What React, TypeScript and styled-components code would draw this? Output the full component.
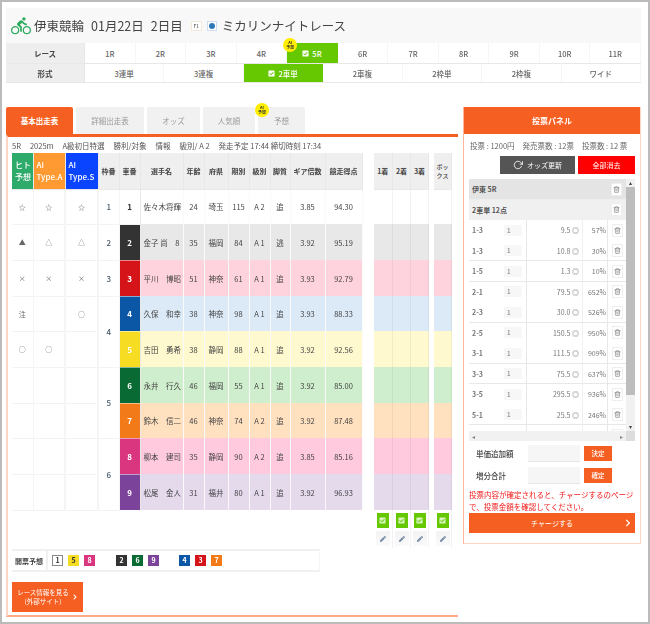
import styled, { createGlobalStyle } from 'styled-components';
import { FaCheckSquare, FaChevronRight, FaPen } from 'react-icons/fa';
import { FiRotateCw, FiTrash2 } from 'react-icons/fi';
import { MdDirectionsBike } from 'react-icons/md';

const GlobalStyle = createGlobalStyle`
  html, body { margin: 0; padding: 0; background: #fff; }
  body { font-family: "Noto Sans CJK JP", "Liberation Sans", sans-serif; color: #333; }
  * { box-sizing: border-box; }
`;

const Frame = styled.div`
  width: 650px;
  height: 624px;
  border: 2px solid #bbb;
  padding: 6px 7px 0 4px;
  overflow: hidden;
  filter: blur(0.6px);
`;
const Header = styled.header`
  background: #f8f8f8;
  height: 75px;
`;
const TitleRow = styled.div`
  height: 35px;
  display: flex;
  align-items: center;
  padding-left: 5px;
  font-size: 12.5px;
  color: #444;
  svg { color: #2dab5f; margin-right: 3px; }
`;
const Gap = styled.span`
  display: inline-block;
  width: ${p => p.$w}px;
`;
const GradeBadge = styled.span`
  width: 11px;
  height: 10px;
  margin: 0 5px 0 8px;
  border: 1px solid #f2ead8;
  background: #fff;
  font-size: 5px;
  line-height: 8px;
  text-align: center;
`;
const NightIcon = styled.span`
  width: 10px;
  height: 10px;
  margin-right: 5px;
  background: #fff;
  border: 1px solid #cde;
  display: flex;
  align-items: center;
  justify-content: center;
  &::after {
    content: '';
    width: 6px;
    height: 6px;
    border-radius: 50%;
    background: #2c78b8;
  }
`;
const NavRow = styled.div`
  display: flex;
  height: ${p => p.$h}px;
  border-bottom: 1px solid #e8e8e8;
  background: #fff;
`;
const NavLabel = styled.div`
  width: 79px;
  flex: none;
  background: #eee;
  border-right: 1px solid #e8e8e8;
  font-size: 7.5px;
  font-weight: 700;
  color: #444;
  display: flex;
  align-items: center;
  justify-content: center;
`;
const NavCell = styled.div`
  flex: 1;
  position: relative;
  font-size: 7.5px;
  font-weight: 500;
  display: flex;
  align-items: center;
  justify-content: center;
  gap: 3px;
  color: ${p => (p.$active ? '#fff' : '#666')};
  background: ${p => (p.$active ? '#66c800' : '#fff')};
  border-right: 1px solid ${p => (p.$active ? '#66c800' : '#f6f6f6')};
`;
const AiBadge = styled.span`
  position: absolute;
  top: ${p => p.$top}px;
  left: ${p => p.$left}px;
  width: 14px;
  height: 14px;
  border-radius: 50%;
  background: #ffee00;
  color: #333;
  font-size: 4px;
  font-weight: 700;
  line-height: 5px;
  text-align: center;
  padding-top: 2px;
`;

const Main = styled.div`
  display: flex;
  gap: 5px;
  margin-top: 24px;
  align-items: flex-start;
`;
const LeftColumn = styled.section`
  width: 452px;
  flex: none;
`;
const Tabs = styled.div`
  display: flex;
  gap: 3px;
  height: 27px;
`;
const Tab = styled.div`
  position: relative;
  width: ${p => p.$w}px;
  border-radius: 2px 2px 0 0;
  font-size: 7.5px;
  font-weight: ${p => (p.$active ? 700 : 400)};
  color: ${p => (p.$active ? '#fff' : '#999')};
  background: ${p => (p.$active ? '#f55f22' : '#f1f1f1')};
  display: flex;
  align-items: center;
  justify-content: center;
`;
const LeftBody = styled.div`
  height: 483px;
  border-top: 3px solid #f55f22;
  border-left: 2px solid #ffd5c6;
  border-bottom: 2px solid #ffa98a;
  padding-left: 4px;
`;
const InfoLine = styled.div`
  height: 16px;
  display: flex;
  align-items: center;
  gap: 9px;
  font-size: 7.5px;
  color: #555;
  white-space: nowrap;
`;
const TablesRow = styled.div`
  display: flex;
  align-items: flex-start;
  height: 396px;
`;
const Table = styled.table`
  border-collapse: collapse;
  table-layout: fixed;
  width: ${p => p.$w}px;
  margin-right: ${p => p.$mr || 0}px;
  font-size: 8px;
`;
const Th = styled.th`
  height: 36px;
  padding: 0;
  background: ${p => p.$bg || '#efefef'};
  color: ${p => (p.$bg ? '#fff' : '#444')};
  font-size: ${p => (p.$bg ? '8px' : '7px')};
  font-weight: ${p => (p.$bg ? 500 : 700)};
  line-height: 12px;
  text-align: ${p => (p.$bg ? 'left' : 'center')};
  padding-left: ${p => (p.$bg ? '3px' : '0')};
  border-right: 1px solid #e8e8e8;
  border-bottom: 1px solid #e8e8e8;
`;
const BoxTh = styled(Th)`
  font-size: 6px;
  line-height: 9px;
  font-weight: 500;
`;
const Tr = styled.tr`
  height: ${p => p.$h}px;
`;
const Mark = styled.td`
  padding: 0;
  text-align: center;
  font-size: 7px;
  color: #666;
  background: #fff;
  border-right: ${p => (p.$strong ? 2 : 1)}px solid #f5f5f5;
  border-bottom: 1px solid #f3f3f3;
`;
const Waku = styled(Mark)`
  font-size: 8px;
  font-weight: 500;
  color: #4a5a6a;
`;
const CarNo = styled.td`
  padding: 0;
  text-align: center;
  font-size: 8px;
  font-weight: 700;
  color: ${p => p.$fg};
  background: ${p => p.$bg};
  border-left: 1px solid #e8e8e8;
  border-right: 1px solid #e8e8e8;
  border-bottom: 1px solid ${p => (p.$bg === '#ffffff' ? '#f3f3f3' : 'rgba(255,255,255,.5)')};
`;
const Cell = styled.td`
  padding: 0 0 0 ${p => p.$pl || 0}px;
  text-align: ${p => (p.$pl ? 'left' : 'center')};
  font-size: 7.5px;
  color: #444;
  background: ${p => p.$bg};
  white-space: nowrap;
  overflow: hidden;
  border-right: 1px solid rgba(0, 0, 0, 0.02);
`;
const BetCell = styled.td`
  padding: 0;
  background: ${p => p.$bg};
  border-right: 1px solid rgba(0, 0, 0, 0.05);
`;
const ToolCell = styled.td`
  padding: 3px 0 0;
  text-align: center;
  vertical-align: top;
  height: 38px;
  border-right: 1px solid #f2f2f2;
`;
const GreenButton = styled.div`
  width: 12px;
  height: 15px;
  margin: 0 auto 3px;
  background: #66c800;
  color: #d8f5c0;
  display: flex;
  align-items: center;
  justify-content: center;
`;
const GreyButton = styled.div`
  width: 14px;
  height: 15px;
  margin: 0 auto;
  background: linear-gradient(#f3f3f3, #fafafa);
  color: #7a8ea8;
  display: flex;
  align-items: center;
  justify-content: center;
`;
const PredictRow = styled.div`
  width: 308px;
  height: 23px;
  display: flex;
  align-items: center;
  border-top: 2px solid #f0f0f0;
  border-bottom: 2px solid #f0f0f0;
  border-right: 1px solid #f4f4f4;
`;
const PredictLabel = styled.div`
  width: 36px;
  height: 100%;
  border-right: 2px solid #f0f0f0;
  font-size: 7px;
  font-weight: 700;
  color: #444;
  display: flex;
  align-items: center;
  justify-content: center;
  margin-right: 4px;
`;
const Chip = styled.span`
  width: 11px;
  height: 11px;
  margin-right: ${p => p.$mr || 5}px;
  background: ${p => p.$bg};
  color: ${p => p.$fg};
  border: 1px solid ${p => (p.$bg === '#ffffff' ? '#888' : p.$bg)};
  font-size: 7px;
  font-weight: 700;
  line-height: 9px;
  text-align: center;
`;
const OrangeLink = styled.div`
  width: 71px;
  height: 30px;
  margin-top: 10px;
  background: #f55f22;
  color: #fff;
  font-size: 6.5px;
  line-height: 9px;
  display: flex;
  align-items: center;
  justify-content: center;
  gap: 3px;
  text-align: center;
`;

const Panel = styled.aside`
  width: 178px;
  flex: none;
  height: 437px;
  border-left: 1px solid #ffb59a;
  border-bottom: 1px solid #ffd5c6;
  border-right: 1px solid #ffd5c6;
`;
const PanelHead = styled.div`
  height: 27px;
  background: #f55f22;
  color: #fff;
  font-size: 8px;
  font-weight: 700;
  display: flex;
  align-items: center;
  justify-content: center;
`;
const PanelStats = styled.div`
  height: 22px;
  padding: 0 0 0 6px;
  display: flex;
  align-items: center;
  gap: 8px;
  font-size: 7.5px;
  color: #666;
  white-space: nowrap;
`;
const ButtonRow = styled.div`
  display: flex;
  justify-content: flex-end;
  gap: 3px;
  padding-right: 5px;
`;
const ActionButton = styled.div`
  width: ${p => p.$w}px;
  height: 18px;
  background: ${p => p.$bg};
  color: #fff;
  font-size: 7px;
  display: flex;
  align-items: center;
  justify-content: center;
  gap: 4px;
`;
const ListBox = styled.div`
  margin: 5px 5px 0 5px;
  display: grid;
  grid-template-columns: 1fr 9px;
  grid-template-rows: 252px 10px;
  background: #f4f4f4;
`;
const ListClip = styled.div`
  overflow: hidden;
  background: #fff;
`;
const SummaryRow = styled.div`
  height: ${p => p.$h}px;
  background: ${p => p.$bg};
  border-bottom: 1px solid #eee;
  font-size: 7px;
  font-weight: 700;
  color: #555;
  display: flex;
  align-items: center;
  justify-content: space-between;
  padding: 0 4px 0 3px;
`;
const MiniButton = styled.span`
  width: 11px;
  height: 13px;
  background: #fff;
  border: 1px solid #eee;
  color: #777;
  display: flex;
  align-items: center;
  justify-content: center;
`;
const BetRow = styled.div`
  height: 20.5px;
  display: grid;
  grid-template-columns: 58px 56px 25px 1fr;
  align-items: center;
  font-size: 7px;
  color: #777;
  border-bottom: ${p => (p.$line ? '1px solid #e8e8e8' : 'none')};
`;
const Combo = styled.div`
  height: 100%;
  padding-left: 3px;
  display: flex;
  align-items: center;
  justify-content: space-between;
  padding-right: 4px;
  font-weight: 700;
  border-right: 1px solid #e8e8e8;
`;
const Qty = styled.span`
  width: 18px;
  height: 11px;
  background: #f7f7f7;
  color: #999;
  font-size: 6px;
  line-height: 11px;
  padding-left: 3px;
`;
const Odds = styled.div`
  height: 100%;
  padding-right: 3px;
  display: flex;
  align-items: center;
  justify-content: flex-end;
  gap: 2px;
  border-right: 1px solid #f0f0f0;
`;
const Rate = styled.div`
  height: 100%;
  padding-right: 1px;
  text-align: right;
  line-height: 20px;
  border-right: 1px solid #e8e8e8;
`;
const RowTool = styled.div`
  display: flex;
  justify-content: center;
`;
const ScrollTrack = styled.div`
  background: #f1f1f1;
  display: flex;
  flex-direction: column;
  align-items: center;
  color: #444;
  font-size: 6px;
  line-height: 8px;
`;
const ScrollThumb = styled.div`
  width: 100%;
  height: 208px;
  background: #bdbdbd;
`;
const ScrollArrow = styled.span`
  height: 8px;
  margin-top: ${p => p.$mt || 0}px;
`;
const HScroll = styled.div`
  background: #f1f1f1;
  color: #888;
  font-size: 6px;
  display: flex;
  align-items: center;
  justify-content: space-between;
  padding: 0 3px;
`;
const Corner = styled.div`
  background: #ddd;
`;
const AmountRow = styled.div`
  display: flex;
  align-items: center;
  height: 22px;
  margin-top: ${p => p.$mt || 0}px;
  padding-left: 12px;
  font-size: 7.5px;
  font-weight: 500;
  color: #444;
`;
const AmountLabel = styled.span`
  width: 52px;
`;
const AmountInput = styled.span`
  width: 52px;
  height: 17px;
  background: #f6f6f6;
  border-bottom: 1px solid #e6e6e6;
  margin-right: 4px;
`;
const SmallOrange = styled.span`
  width: 28px;
  height: 15px;
  background: #f55f22;
  color: #fff;
  font-size: 6.5px;
  display: flex;
  align-items: center;
  justify-content: center;
`;
const Warning = styled.p`
  margin: 3px 4px 1px 5px;
  color: #f01818;
  font-size: 7.5px;
  line-height: 11.5px;
`;
const ChargeButton = styled.div`
  height: 20px;
  margin: 0 5px;
  background: #f55f22;
  color: #fff;
  font-size: 7px;
  position: relative;
  display: flex;
  align-items: center;
  justify-content: center;
  svg { position: absolute; right: 3px; top: 6px; }
`;

const runners = [
  { no: 1, bg: '#ffffff', car: '#ffffff', fg: '#333', name: '佐々木将輝', age: 24, pref: '埼玉', term: 115, cls: 'A 2', leg: '追', gear: '3.85', score: '94.30' },
  { no: 2, bg: '#e8e8e8', car: '#333333', fg: '#fff', name: '金子 尚　8', age: 35, pref: '福岡', term: 84, cls: 'A 1', leg: '逃', gear: '3.92', score: '95.19' },
  { no: 3, bg: '#ffd3dd', car: '#d5141a', fg: '#fff', name: '平川　博昭', age: 51, pref: '神奈', term: 61, cls: 'A 1', leg: '追', gear: '3.93', score: '92.79' },
  { no: 4, bg: '#dceaf7', car: '#0b56a5', fg: '#fff', name: '久保　和幸', age: 38, pref: '神奈', term: 98, cls: 'A 1', leg: '追', gear: '3.93', score: '88.33' },
  { no: 5, bg: '#fff9cf', car: '#f6dc22', fg: '#fff', name: '吉田　勇希', age: 38, pref: '静岡', term: 88, cls: 'A 1', leg: '追', gear: '3.92', score: '92.56' },
  { no: 6, bg: '#cfeecd', car: '#0a6a34', fg: '#fff', name: '永井　行久', age: 46, pref: '福岡', term: 55, cls: 'A 1', leg: '追', gear: '3.92', score: '85.00' },
  { no: 7, bg: '#ffe0bf', car: '#f27a18', fg: '#fff', name: '鈴木　信二', age: 46, pref: '神奈', term: 74, cls: 'A 2', leg: '追', gear: '3.92', score: '87.48' },
  { no: 8, bg: '#ffcade', car: '#d9367f', fg: '#fff', name: '柳本　建司', age: 35, pref: '静岡', term: 90, cls: 'A 2', leg: '追', gear: '3.85', score: '85.16' },
  { no: 9, bg: '#e5d9ec', car: '#7b439a', fg: '#fff', name: '松尾　金人', age: 31, pref: '福井', term: 80, cls: 'A 1', leg: '追', gear: '3.92', score: '96.93' },
];
const heights = [35, 36, 36, 35, 36, 36, 35, 36, 36];
const marks = [
  ['☆', '☆', '☆'], ['▲', '△', '△'], ['×', '×', '×'], ['注', '', '○'], ['○', '○', ''],
  ['', '', ''], ['', '', ''], ['', '', ''], ['', '', ''],
];
const waku: Record<number, [number, number]> = { 0: [1, 1], 1: [2, 1], 2: [3, 1], 3: [4, 2], 5: [5, 2], 7: [6, 2] };

const bets = [
  ['1-3', '9.5', '57%', false], ['1-3', '10.8', '30%', true], ['1-5', '1.3', '10%', true],
  ['2-1', '79.5', '652%', false], ['2-3', '30.0', '526%', true], ['2-5', '150.5', '950%', false],
  ['3-1', '111.5', '909%', true], ['3-3', '75.5', '637%', true], ['3-5', '295.5', '936%', false],
  ['5-1', '25.5', '246%', true],
] as const;

const chips: [number, string, string, number?][] = [
  [1, '#ffffff', '#333'], [5, '#f6dc22', '#333'], [8, '#d9367f', '#fff', 21],
  [2, '#333333', '#fff'], [6, '#0a6a34', '#fff'], [9, '#7b439a', '#fff', 20],
  [4, '#0b56a5', '#fff'], [3, '#d5141a', '#fff'], [7, '#f27a18', '#fff'],
];

const races = ['1R', '2R', '3R', '4R', '5R', '6R', '7R', '8R', '9R', '10R', '11R'];
const formats = ['3連単', '3連複', '2車単', '2車複', '2枠単', '2枠複', 'ワイド'];

function ToolStack() {
  return (
    <ToolCell>
      <GreenButton><FaCheckSquare size={7} /></GreenButton>
      <GreyButton><FaPen size={6} /></GreyButton>
    </ToolCell>
  );
}

export default function App() {
  return (
    <Frame>
      <GlobalStyle />
      <Header>
        <TitleRow>
          <MdDirectionsBike size={20} />
          伊東競輪<Gap $w={7} />01月22日<Gap $w={7} />2日目
          <GradeBadge>F1</GradeBadge>
          <NightIcon />
          ミカリンナイトレース
        </TitleRow>
        <NavRow $h={21}>
          <NavLabel>レース</NavLabel>
          {races.map(r => (
            <NavCell key={r} $active={r === '5R'}>
              {r === '5R' && <FaCheckSquare size={7} />}
              {r}
              {r === '5R' && <AiBadge $top={-5} $left={-4}>AI<br />予想</AiBadge>}
            </NavCell>
          ))}
        </NavRow>
        <NavRow $h={19}>
          <NavLabel>形式</NavLabel>
          {formats.map(f => (
            <NavCell key={f} $active={f === '2車単'}>
              {f === '2車単' && <FaCheckSquare size={7} />}
              {f}
            </NavCell>
          ))}
        </NavRow>
      </Header>

      <Main>
        <LeftColumn>
          <Tabs>
            <Tab $w={67} $active>基本出走表</Tab>
            <Tab $w={68}>詳細出走表</Tab>
            <Tab $w={53}>オッズ</Tab>
            <Tab $w={52}>人気順</Tab>
            <Tab $w={47}>
              予想
              <AiBadge $top={-4} $left={-3}>AI<br />予想</AiBadge>
            </Tab>
          </Tabs>
          <LeftBody>
            <InfoLine>
              <span>5R</span>
              <span>2025m</span>
              <span>A級初日特選</span>
              <span>勝利/対象</span>
              <span>情報</span>
              <span>級別/ A 2</span>
              <span>発走予定 17:44 締切時刻 17:34</span>
            </InfoLine>
            <TablesRow>
              <Table $w={350} $mr={11}>
                <colgroup>
                  <col width={21} /><col width={32} /><col width={33} /><col width={21} /><col width={21} />
                  <col width={43} /><col width={21} /><col width={24} /><col width={21} /><col width={21} />
                  <col width={20} /><col width={35} /><col width={37} />
                </colgroup>
                <thead>
                  <tr>
                    <Th $bg="#2eab6a">ヒト<br />予想</Th>
                    <Th $bg="#ff9a33">AI<br />Type.A</Th>
                    <Th $bg="#0a44ff">AI<br />Type.S</Th>
                    <Th>枠番</Th>
                    <Th>車番</Th>
                    <Th>選手名</Th>
                    <Th>年齢</Th>
                    <Th>府県</Th>
                    <Th>期別</Th>
                    <Th>級別</Th>
                    <Th>脚質</Th>
                    <Th>ギア倍数</Th>
                    <Th>競走得点</Th>
                  </tr>
                </thead>
                <tbody>
                  {runners.map((r, i) => (
                    <Tr key={r.no} $h={heights[i]}>
                      <Mark>{marks[i][0]}</Mark>
                      <Mark $strong>{marks[i][1]}</Mark>
                      <Mark $strong>{marks[i][2]}</Mark>
                      {waku[i] && <Waku rowSpan={waku[i][1]}>{waku[i][0]}</Waku>}
                      <CarNo $bg={r.car} $fg={r.fg}>{r.no}</CarNo>
                      <Cell $bg={r.bg} $pl={3}>{r.name}</Cell>
                      <Cell $bg={r.bg}>{r.age}</Cell>
                      <Cell $bg={r.bg}>{r.pref}</Cell>
                      <Cell $bg={r.bg}>{r.term}</Cell>
                      <Cell $bg={r.bg}>{r.cls}</Cell>
                      <Cell $bg={r.bg}>{r.leg}</Cell>
                      <Cell $bg={r.bg}>{r.gear}</Cell>
                      <Cell $bg={r.bg}>{r.score}</Cell>
                    </Tr>
                  ))}
                </tbody>
              </Table>
              <Table $w={55} $mr={5}>
                <colgroup><col width={19} /><col width={18} /><col width={18} /></colgroup>
                <thead>
                  <tr><Th>1着</Th><Th>2着</Th><Th>3着</Th></tr>
                </thead>
                <tbody>
                  {runners.map((r, i) => (
                    <Tr key={r.no} $h={heights[i]}>
                      <BetCell $bg={r.bg} /><BetCell $bg={r.bg} /><BetCell $bg={r.bg} />
                    </Tr>
                  ))}
                  <tr><ToolStack /><ToolStack /><ToolStack /></tr>
                </tbody>
              </Table>
              <Table $w={18}>
                <thead>
                  <tr><BoxTh>ボッ<br />クス</BoxTh></tr>
                </thead>
                <tbody>
                  {runners.map((r, i) => (
                    <Tr key={r.no} $h={heights[i]}><BetCell $bg={r.bg} /></Tr>
                  ))}
                  <tr><ToolStack /></tr>
                </tbody>
              </Table>
            </TablesRow>
            <PredictRow>
              <PredictLabel>開票予想</PredictLabel>
              {chips.map(([n, bg, fg, mr]) => (
                <Chip key={n} $bg={bg} $fg={fg} $mr={mr}>{n}</Chip>
              ))}
            </PredictRow>
            <OrangeLink>
              <span>レース情報を見る<br />(外部サイト)</span>
              <FaChevronRight size={6} />
            </OrangeLink>
          </LeftBody>
        </LeftColumn>

        <Panel>
          <PanelHead>投票パネル</PanelHead>
          <PanelStats>
            <span>投票 : 1200円</span>
            <span>発売票数 : 12票</span>
            <span>投票数 : 12 票</span>
          </PanelStats>
          <ButtonRow>
            <ActionButton $w={75} $bg="#555"><FiRotateCw size={10} />オッズ更新</ActionButton>
            <ActionButton $w={57} $bg="#fe0000">全部消去</ActionButton>
          </ButtonRow>
          <ListBox>
            <ListClip>
              <SummaryRow $h={21} $bg="#e4e4e4">
                伊東 5R
                <MiniButton><FiTrash2 size={7} /></MiniButton>
              </SummaryRow>
              <SummaryRow $h={20} $bg="#f0f0f0">
                2車単 12点
                <MiniButton><FiTrash2 size={7} /></MiniButton>
              </SummaryRow>
              {bets.map(([combo, odds, rate, line], i) => (
                <BetRow key={i} $line={line}>
                  <Combo>{combo}<Qty>1</Qty></Combo>
                  <Odds>{odds} ◎</Odds>
                  <Rate>{rate}</Rate>
                  <RowTool><MiniButton><FiTrash2 size={7} /></MiniButton></RowTool>
                </BetRow>
              ))}
              <BetRow>
                <Combo />
                <Odds />
                <Rate />
                <RowTool><MiniButton /></RowTool>
              </BetRow>
            </ListClip>
            <ScrollTrack>
              <ScrollArrow>▴</ScrollArrow>
              <ScrollThumb />
              <ScrollArrow $mt={28}>▾</ScrollArrow>
            </ScrollTrack>
            <HScroll><span>◂</span><span>▸</span></HScroll>
            <Corner />
          </ListBox>
          <AmountRow $mt={1}>
            <AmountLabel>単価追加額</AmountLabel>
            <AmountInput />
            <SmallOrange>決定</SmallOrange>
          </AmountRow>
          <AmountRow>
            <AmountLabel>増分合計</AmountLabel>
            <AmountInput />
            <SmallOrange>確定</SmallOrange>
          </AmountRow>
          <Warning>投票内容が確定されると、チャージするのページで、投票金額を確認してください。</Warning>
          <ChargeButton>
            チャージする
            <FaChevronRight size={8} />
          </ChargeButton>
        </Panel>
      </Main>
    </Frame>
  );
}
